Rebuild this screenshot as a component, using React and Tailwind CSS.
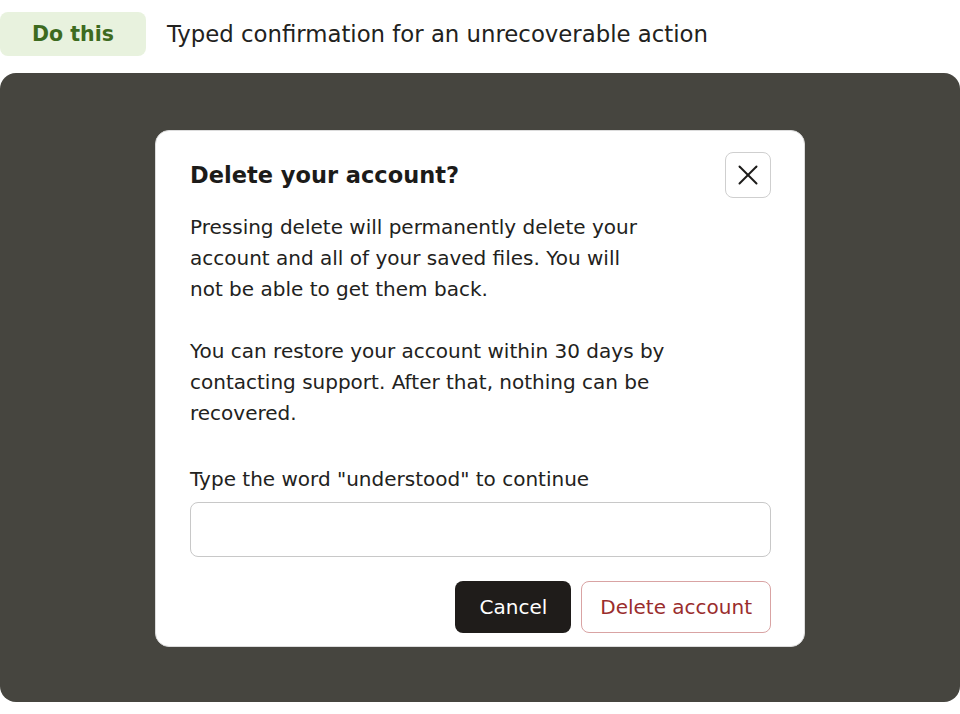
import { useState } from "react";

function CloseIcon() {
  return (
    <svg width="20" height="20" viewBox="0 0 20 20" fill="none" stroke="currentColor" strokeWidth="2" strokeLinecap="round">
      <path d="M1.5 1.5 L18.5 18.5" />
      <path d="M18.5 1.5 L1.5 18.5" />
    </svg>
  );
}

export default function App() {
  const [value, setValue] = useState("");

  return (
    <div className="w-[960px] h-[714px] bg-white font-['DejaVu_Sans',sans-serif] text-[#222220]">
      {/* Label row */}
      <div className="flex items-center gap-[21px] pt-3">
        <span className="flex h-[44px] items-center rounded-lg bg-[#e8f2de] px-8 text-[20.5px] font-bold text-[#3d6b1f]">
          Do this
        </span>
        <span className="text-[22.8px] text-[#222220]">
          Typed confirmation for an unrecoverable action
        </span>
      </div>

      {/* Backdrop */}
      <div className="mt-[17px] flex h-[629px] justify-center rounded-[16px] bg-[#46453f] pt-[57px]">
        <div className="h-fit w-[650px] rounded-[14px] border border-[#dcdcdc] bg-white pt-[21px] pb-[13px] pl-[34px] pr-[33px]">
          {/* Header */}
          <div className="flex items-center justify-between">
            <h2 className="text-[22.5px] font-bold leading-[28px] text-[#1c1b19]">
              Delete your account?
            </h2>
            <button className="flex h-[46px] w-[46px] items-center justify-center rounded-lg border border-[#cfcfcf] text-[#1c1b19]">
              <CloseIcon />
            </button>
          </div>

          {/* Body */}
          <p className="mt-[14px] text-[20px] leading-[31px]">
            Pressing delete will permanently delete your
            <br />
            account and all of your saved files. You will
            <br />
            not be able to get them back.
          </p>
          <p className="mt-[31px] text-[20px] leading-[31px]">
            You can restore your account within 30 days by
            <br />
            contacting support. After that, nothing can be
            <br />
            recovered.
          </p>

          <label className="mt-[35px] block text-[20px] leading-[31px]">
            Type the word "understood" to continue
          </label>
          <input
            value={value}
            onChange={(e) => setValue(e.target.value)}
            className="mt-[7px] block h-[55px] w-full rounded-lg border border-[#c8c8c8] px-4 text-[20px] outline-none"
          />

          {/* Actions */}
          <div className="mt-[24px] flex justify-end gap-[10px]">
            <button className="h-[52px] rounded-lg bg-[#1f1c1a] px-[24px] text-[20px] text-white">
              Cancel
            </button>
            <button className="h-[52px] rounded-lg border border-[#d9a3a3] bg-white px-[18px] text-[20px] text-[#9a2d2d]">
              Delete account
            </button>
          </div>
        </div>
      </div>
    </div>
  );
}
